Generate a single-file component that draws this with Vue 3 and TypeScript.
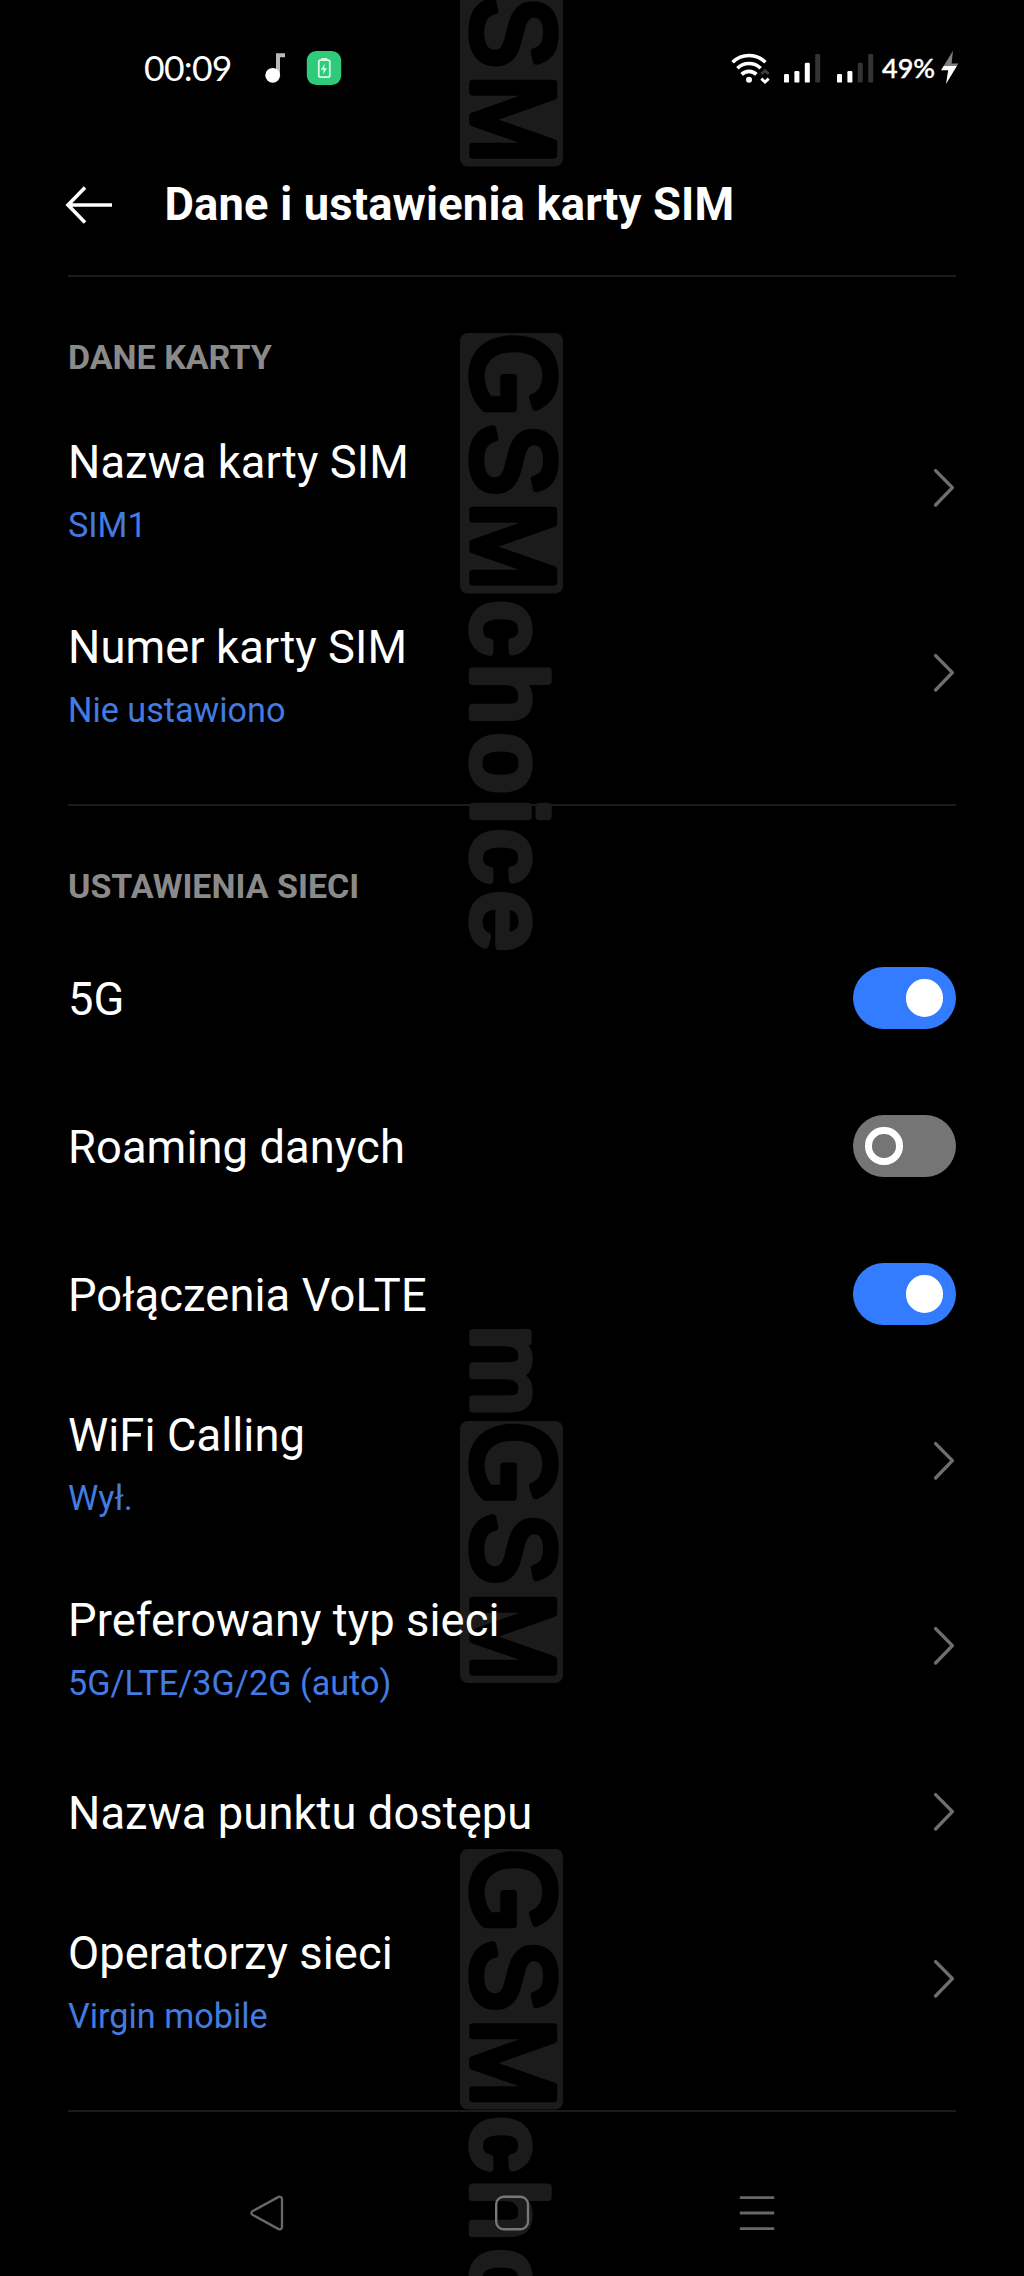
<script setup lang="ts">
interface Row {
  title: string
  value?: string
  toggle?: boolean
}
interface Section {
  heading: string
  rows: Row[]
}
interface Mark {
  text: string
  centers: number[]
}

const sections: Section[] = [
  {
    heading: 'DANE KARTY',
    rows: [
      { title: 'Nazwa karty SIM', value: 'SIM1' },
      { title: 'Numer karty SIM', value: 'Nie ustawiono' },
    ],
  },
  {
    heading: 'USTAWIENIA SIECI',
    rows: [
      { title: '5G', toggle: true },
      { title: 'Roaming danych', toggle: false },
      { title: 'Połączenia VoLTE', toggle: true },
      { title: 'WiFi Calling', value: 'Wył.' },
      { title: 'Preferowany typ sieci', value: '5G/LTE/3G/2G (auto)' },
      { title: 'Nazwa punktu dostępu' },
      { title: 'Operatorzy sieci', value: 'Virgin mobile' },
    ],
  },
]

// Bars of both signal meters: x offset and number of lit bars
const meters = [
  { x: 784, lit: 3 },
  { x: 837, lit: 2 },
]
const barTops = [74, 71, 62.7, 54]

// Vertical wordmark: plates and the centre of every letter along the page
const plates = [
  { y: -94, h: 260.5 },
  { y: 333, h: 260.5 },
  { y: 1421, h: 262 },
  { y: 1849, h: 260.5 },
]
const layers: { name: string; size: number; stretch: number; marks: Mark[] }[] = [
  {
    name: 'dark',
    size: 117,
    stretch: 0.92,
    marks: [
      { text: 'GSM', centers: [-52, 32, 119.5] },
      { text: 'GSM', centers: [375, 459.5, 546.3] },
      { text: 'GSM', centers: [1463.5, 1548.5, 1636.5] },
      { text: 'GSM', centers: [1891, 1975.5, 2063] },
    ],
  },
  {
    name: 'light',
    size: 104,
    stretch: 1.04,
    marks: [
      { text: 'choice', centers: [629.5, 694, 763, 811.5, 857.5, 921] },
      { text: 'm', centers: [1370.5] },
      { text: 'choice', centers: [2145.5, 2210, 2279, 2327, 2373, 2437] },
    ],
  },
]
// Horizontal middle of each letter's ink, in em
const middle: Record<string, number> = {
  G: 0.388, S: 0.333, M: 0.417, c: 0.265, h: 0.277, o: 0.278, i: 0.111, e: 0.277, m: 0.416,
}
const xs = (m: Mark, size: number, stretch: number) =>
  m.centers.map((c, i) => (c / stretch - middle[m.text[i]] * size).toFixed(1)).join(' ')
</script>

<template>
  <main class="screen">
    <svg class="watermark" width="1024" height="2276" viewBox="0 0 1024 2276">
      <rect v-for="p in plates" :key="p.y" x="460" :y="p.y" width="103" :height="p.h" rx="8" fill="#1b1b1b" />
      <g
        v-for="l in layers"
        :key="l.name"
        :class="l.name"
        :transform="`translate(472.5 0) rotate(90) scale(${l.stretch} 1)`"
      >
        <text v-for="(m, i) in l.marks" :key="i" :x="xs(m, l.size, l.stretch)" y="0" :font-size="l.size">{{ m.text }}</text>
      </g>
    </svg>

    <header class="status">
      <span class="clock">00:09</span>
      <svg class="notes" width="86" height="40" viewBox="260 48 86 40">
        <path d="M278 76V55.3h7" fill="none" stroke="#b9b9b9" stroke-width="4" />
        <circle cx="272.7" cy="75.3" r="7.4" fill="#fff" />
        <rect x="306.8" y="51" width="34.4" height="34" rx="9.5" fill="#2ecc7a" />
        <g fill="none" stroke="#d9f8e6" stroke-width="1.8">
          <rect x="318.8" y="60.2" width="11" height="17" rx="1.6" />
          <path d="M321.5 59h5.8" stroke-width="2" />
        </g>
        <path d="M324.8 63.8l-3.9 6h2.8l-.7 4.4 4-6h-2.8z" fill="#e6fff0" />
      </svg>
      <svg class="signals" width="150" height="40" viewBox="728 48 150 40">
        <g fill="none" stroke="#fff" stroke-width="3.6">
          <path d="M732.6 62.2a23.4 23.4 0 0 1 32.8 0" />
          <path d="M737.4 68.2a16.6 16.6 0 0 1 23.2 0" />
          <path d="M741.6 74.4a10.5 10.5 0 0 1 14.8 0" />
        </g>
        <circle cx="749" cy="79.7" r="3" fill="#fff" />
        <path d="M761.3 74l3.7-3.5 3.7 3.5" fill="none" stroke="#3c3c3c" stroke-width="2.6" />
        <path d="M761.3 78.6l3.7 3.4 3.7-3.4" fill="none" stroke="#fff" stroke-width="2.8" />
        <template v-for="m in meters" :key="m.x">
          <rect
            v-for="(t, i) in barTops"
            :key="i"
            :x="m.x + i * 10.4"
            :y="t"
            width="5"
            :height="82.6 - t"
            rx="1.2"
            :fill="i < m.lit ? '#fff' : '#333'"
          />
        </template>
      </svg>
      <span class="percent">49%</span>
      <svg class="bolt" width="20" height="36" viewBox="940 51 20 36">
        <defs>
          <linearGradient id="charge" x1="0" y1="0" x2="0" y2="1">
            <stop offset="0.46" stop-color="#7d7d7d" />
            <stop offset="0.46" stop-color="#fff" />
          </linearGradient>
        </defs>
        <path d="M953 51.8L941 71.3h7.2L946 85l12.4-20.4h-6.8z" fill="url(#charge)" />
      </svg>
    </header>

    <div class="titlebar">
      <svg width="50" height="40" viewBox="0 0 50 40" fill="none" stroke="#fff" stroke-width="3.6">
        <path d="M48 20H4M21 2.6L4 20l17 17.4" />
      </svg>
      <h1>Dane i ustawienia karty SIM</h1>
    </div>

    <section v-for="s in sections" :key="s.heading">
      <h2>{{ s.heading }}</h2>
      <div v-for="r in s.rows" :key="r.title" :class="['row', { tall: r.value }]">
        <div class="label">
          <span class="name">{{ r.title }}</span>
          <span v-if="r.value" class="value">{{ r.value }}</span>
        </div>
        <span v-if="r.toggle !== undefined" :class="['toggle', { on: r.toggle }]"><i></i></span>
        <svg v-else width="24" height="40" viewBox="0 0 24 40">
          <path d="M3.6 2.6L20.4 19.6 3.6 37" fill="none" stroke="#6e6e6e" stroke-width="3.4" stroke-linecap="round" stroke-linejoin="round" />
        </svg>
      </div>
    </section>

    <nav>
      <svg width="36" height="38" viewBox="0 0 36 38">
        <path d="M3.4 17.2L29.6 2.9a2.4 2.4 0 0 1 3.4 2v28.2a2.4 2.4 0 0 1-3.4 2L3.4 20.8a2.1 2.1 0 0 1 0-3.6z" fill="none" stroke="#686868" stroke-width="2.3" />
      </svg>
      <svg width="36" height="38" viewBox="0 0 36 38">
        <rect x="2.2" y="2.8" width="31.8" height="32.4" rx="7.5" fill="none" stroke="#777" stroke-width="2.4" />
      </svg>
      <svg width="36" height="38" viewBox="0 0 36 38">
        <path d="M.8 3.6h34.4M.8 19h34.4M.8 34.6h34.4" stroke="#686868" stroke-width="2.8" />
      </svg>
    </nav>
  </main>
</template>

<style>
body {
  background: #000;
}
</style>

<style scoped>
.screen {
  position: relative;
  width: 1024px;
  height: 2276px;
  overflow: hidden;
  background: #000;
  color: #fff;
  font-family: Roboto, sans-serif;
  isolation: isolate;
}
.watermark {
  position: absolute;
  inset: 0;
  z-index: -1;
  font-family: 'Liberation Sans', sans-serif;
  stroke-linejoin: round;
}
.dark {
  fill: #000;
  stroke: #000;
  stroke-width: 7.5px;
}
.light {
  fill: #1b1b1b;
  stroke: #1b1b1b;
  stroke-width: 7.5px;
}
.status {
  display: flex;
  align-items: center;
  height: 136px;
  padding-left: 144px;
  box-sizing: border-box;
}
.status > svg {
  flex: none;
}
.clock {
  width: 116px;
  font: 35.5px/40px Lato, sans-serif;
  letter-spacing: -0.7px;
}
.notes {
  margin-right: 382px;
}
.percent {
  width: 58px;
  margin-left: 4px;
  font: 500 27px/32px Lato, sans-serif;
  -webkit-text-stroke: 0.4px #fff;
  white-space: nowrap;
}
.titlebar {
  display: flex;
  align-items: center;
  height: 137px;
  margin-bottom: 2px;
  padding-left: 64px;
}
h1 {
  margin: 0 0 0 50.5px;
  font-size: 45.3px;
  line-height: 53px;
  font-weight: 700;
  letter-spacing: 0.17px;
  white-space: nowrap;
}
section {
  margin: 0 68px;
  padding-bottom: 39px;
  border-top: 2px solid #1b1b1b;
}
h2 {
  height: 58px;
  margin: 0;
  padding-top: 60px;
  font-size: 34px;
  line-height: 40px;
  font-weight: 700;
  color: #8a8a8a;
}
.row {
  display: flex;
  align-items: center;
  justify-content: space-between;
  height: 148px;
}
.row.tall {
  height: 185px;
}
.label {
  display: flex;
  flex-direction: column;
  gap: 16px;
  padding-top: 3px;
}
.tall .label {
  padding-top: 5px;
}
.name {
  font-size: 45.3px;
  line-height: 53px;
  letter-spacing: 0.08px;
}
.value {
  font-size: 34.2px;
  line-height: 40px;
  color: #437be0;
}
.toggle {
  display: flex;
  align-items: center;
  width: 102.5px;
  height: 62.6px;
  margin-right: 0.5px;
  padding: 0 12.3px;
  box-sizing: border-box;
  border-radius: 32px;
  background: #757575;
}
.toggle i {
  width: 37.4px;
  height: 37.4px;
  box-sizing: border-box;
  border: 7.4px solid #fff;
  border-radius: 50%;
}
.toggle.on {
  justify-content: flex-end;
  background: #347cff;
}
.toggle.on i {
  background: #fff;
}
nav {
  display: flex;
  justify-content: space-between;
  margin: 0 68px;
  padding: 82px 181px 0;
  border-top: 2px solid #1b1b1b;
}
</style>
